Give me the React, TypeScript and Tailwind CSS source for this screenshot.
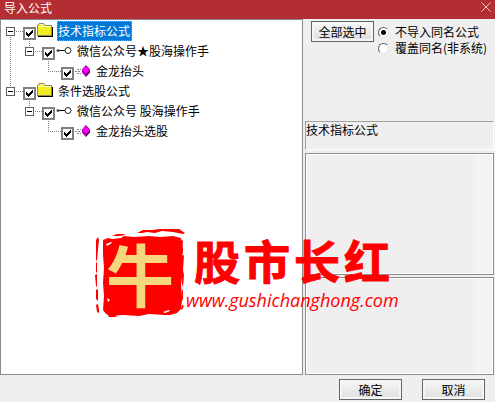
import { useState } from 'react';
import type { ReactNode } from 'react';

type Gutter = 'blank' | 'through' | 'rootFirst' | 'rootLast' | 'branch' | 'leaf';

type Row = {
  id: string;
  label: string;
  icon: 'folder' | 'key' | 'gem';
  gutters: Gutter[];
};

const rows: Row[] = [
  { id: 'tech', label: '技术指标公式', icon: 'folder', gutters: ['rootFirst'] },
  { id: 'tech-group', label: '微信公众号★股海操作手', icon: 'key', gutters: ['through', 'branch'] },
  { id: 'tech-item', label: '金龙抬头', icon: 'gem', gutters: ['through', 'blank', 'leaf'] },
  { id: 'pick', label: '条件选股公式', icon: 'folder', gutters: ['rootLast'] },
  { id: 'pick-group', label: '微信公众号 股海操作手', icon: 'key', gutters: ['blank', 'branch'] },
  { id: 'pick-item', label: '金龙抬头选股', icon: 'gem', gutters: ['blank', 'blank', 'leaf'] },
];

function GutterCell({ kind }: { kind: Gutter }) {
  const expandable = kind === 'rootFirst' || kind === 'rootLast' || kind === 'branch';
  const passes = kind === 'through' || kind === 'rootFirst';
  const fromAbove = passes || kind === 'rootLast' || kind === 'branch' || kind === 'leaf';
  const top = kind === 'rootFirst' ? 10 : 0;
  const bottom = passes ? 20 : 11;
  const wide = expandable || kind === 'leaf';
  return (
    <svg
      className={wide ? 'h-5 w-[22px] shrink-0' : 'h-5 w-[19px] shrink-0'}
      viewBox={wide ? '0 0 22 20' : '0 0 19 20'}
      fill="none"
      shapeRendering="crispEdges"
      aria-hidden="true"
    >
      {fromAbove && <path d={`M9.5 ${top}V${bottom}`} stroke="#808080" strokeDasharray="1 1" />}
      {wide && <path d="M9 10.5H22" stroke="#808080" strokeDasharray="1 1" />}
      {expandable && (
        <>
          <rect x="5.5" y="6.5" width="8" height="8" fill="#fff" stroke="#606060" />
          <path d="M7 10.5H12" stroke="#000" />
        </>
      )}
    </svg>
  );
}

function NodeIcon({ kind }: { kind: Row['icon'] }) {
  if (kind === 'folder') {
    return (
      <svg className="h-4 w-4" viewBox="0 0 16 16" shapeRendering="crispEdges" aria-hidden="true">
        <path d="M1 13h14V4h1v10H1z" fill="#000" />
        <path d="M.5 12.500v-10l2-2h4l2 2h6v10z" fill="#f0ec20" stroke="#8c8c60" />
        <path d="M3 1.500h3M2 3.500h12" stroke="#ffffc8" />
        <path d="M2 5.500h12M2 7.500h12M2 9.500h12M2 11.500h12" stroke="#e0e0a0" strokeDasharray="1 1" />
      </svg>
    );
  }
  if (kind === 'key') {
    return (
      <svg className="h-4 w-4" viewBox="0 0 16 16" fill="none" aria-hidden="true">
        <path d="M3 7.500h6" stroke="#000" />
        <circle cx="2" cy="7.500" r="1.500" fill="#555" />
        <circle cx="12" cy="7.500" r="3" stroke="#222" />
      </svg>
    );
  }
  return (
    <svg className="h-4 w-4" viewBox="0 0 16 16" fill="none" aria-hidden="true">
      <path d="M2 6.500h4M0 8.500h5M2 10.500h4" stroke="#808080" strokeDasharray="2 1" shapeRendering="crispEdges" />
      <path d="M11 2l4 4.500v3l-4 4.500-4-4.500v-3z" fill="#600060" />
      <path d="M11 3l4 4-4 4-4-4z" fill="#ff00ff" />
      <path d="M7 8l4 4v1.500l-4-4z" fill="#e800e8" />
    </svg>
  );
}

function TreeRow({ row, selected, onSelect }: { row: Row; selected: boolean; onSelect: () => void }) {
  const [checked, setChecked] = useState(true);
  return (
    <li className="flex h-5 items-center">
      {row.gutters.map((kind, i) => (
        <GutterCell key={i} kind={kind} />
      ))}
      <span className="grid h-5 w-[13px] shrink-0 items-end pb-px">
        <input
          id={row.id}
          type="checkbox"
          checked={checked}
          onChange={() => setChecked(!checked)}
          className="col-start-1 row-start-1 h-[13px] w-[13px] appearance-none border-2 border-[#808080] bg-white"
        />
        {checked && (
          <svg className="pointer-events-none col-start-1 row-start-1 h-[13px] w-[13px]" viewBox="0 0 13 13" aria-hidden="true">
            <path d="M3 5l2 2 5-5v3L5 10 3 8z" fill="#000" shapeRendering="crispEdges" />
          </svg>
        )}
      </span>
      <span className="ml-px w-5">
        <NodeIcon kind={row.icon} />
      </span>
      <label
        htmlFor={row.id}
        onClick={onSelect}
        className={
          selected
            ? 'h-5 border border-dotted border-[#ff8728] bg-[#0078d7] pr-px leading-[18px] whitespace-nowrap text-white'
            : 'h-5 border border-transparent pr-px leading-[18px] whitespace-nowrap'
        }
      >
        {row.label}
      </label>
    </li>
  );
}

function PushButton({ children }: { children: ReactNode }) {
  return (
    <button
      type="button"
      className="h-[21px] w-[63px] border border-[#666] bg-linear-to-b from-[#f8f8f8] to-[#dedede] leading-[17px] whitespace-nowrap shadow-[inset_0_0_0_2px_#f6f6f6]"
    >
      {children}
    </button>
  );
}

function ModeRadio({ label, checked, onChange }: { label: string; checked: boolean; onChange: () => void }) {
  return (
    <label className="flex h-4 items-center gap-[6px] whitespace-nowrap">
      <input
        type="radio"
        name="mode"
        checked={checked}
        onChange={onChange}
        className="h-[11px] w-[11px] shrink-0 appearance-none rounded-full border border-t-[#606060] border-r-[#e4e4e4] border-b-[#e4e4e4] border-l-[#606060] bg-white checked:bg-[radial-gradient(circle,#000_2px,#fff_3px)]"
      />
      {label}
    </label>
  );
}

function InfoBox({ label, className }: { label: string; className: string }) {
  return (
    <div className={`flex border border-[#8c8c8c] bg-white p-px ${className}`}>
      <textarea aria-label={label} readOnly className="block min-w-0 flex-1 resize-none bg-[#efefef] outline-none" />
      <div className="w-[17px] bg-[#f4f3f2]" />
    </div>
  );
}

function Watermark() {
  return (
    <div className="pointer-events-none absolute top-[228px] left-[94px] flex text-[#ff0000]">
      <div className="grid h-[90px] w-[92px] place-items-center">
        <svg className="col-start-1 row-start-1 h-[90px] w-[92px]" viewBox="0 0 92 90" fill="#ff0000" aria-hidden="true">
          <path d="M9 12l5-2 4 1 9-1 3-2 10 1 15-1 11 1 13-1 8 2 2 12-1 11 1 8-2 16 1 15-1 9-4 4-7 2-6 0-15-1-10 2-16-1-12 1-5-2-3-4 1-14-1-13 1-15-1-13z" />
          <path d="M43 5l6-3 9 0 8-1 10 0 9 0 6 4-2 1-10-2-11-1-7 2-8-1-5 1z" />
          <path d="M18 8l5-2 6 0 3 1-8 1zM2 12l2-3 1 3-1 9-1 12-1-1zM2 34l1 1 0 9-1 1zM1 47l2-1 0 13-1-1zM2 62l2-1 0 12-2-2zM2 77l2-1 1 6 0 3-2-1zM87 12l2 1-1 12-1-1zM88 28l2-1-1 15 1 5-1 12-1-3zM88 61l1 2 0 9-2-1zM88 77l2 1-2 4-1-1zM14 87h7l2 2h-8z" />
          <path d="M12 16l5-2 1 1-5 3zM69 84l6-2 1 1-5 2zM13 70l3 2-2 2z" fill="#fff" />
        </svg>
        <span className="col-start-1 row-start-1 text-[68px] leading-[80px] font-bold text-[#f8d77c]">牛</span>
      </div>
      <div className="flex flex-col">
        <div className="flex gap-[4px] pl-[8px] text-[46px] leading-[62px] font-bold [-webkit-text-stroke:1px_#ff0000]">
          <span>股</span>
          <span>市</span>
          <span>长</span>
          <span>红</span>
        </div>
        <span className="font-['Open_Sans',sans-serif] text-[18px] leading-[20px] font-medium italic">www.gushichanghong.com</span>
      </div>
    </div>
  );
}

export default function App() {
  const [selected, setSelected] = useState('tech');
  const [mode, setMode] = useState('skip');
  return (
    <main className="relative flex min-h-screen flex-col bg-[#efefef] font-['Noto_Sans_CJK_SC',sans-serif] text-[12px] leading-[16px] text-black">
      <header className="flex h-[19px] items-start justify-between bg-[#b22e32] pr-1 pl-1 text-white">
        <h1 className="leading-[16px]">导入公式</h1>
        <button type="button" aria-label="关闭" className="pt-[2px]">
          <svg className="h-[10px] w-[10px]" viewBox="0 0 10 10" stroke="#efc9ca" fill="none" aria-hidden="true">
            <path d="M.5.5l9 9M9.500.5l-9 9" />
          </svg>
        </button>
      </header>

      <div className="flex flex-1 gap-[2px]">
        <ul className="flex-1 border border-[#8c8c8c] bg-white pt-px">
          {rows.map((row) => (
            <TreeRow key={row.id} row={row} selected={selected === row.id} onSelect={() => setSelected(row.id)} />
          ))}
        </ul>

        <section className="flex w-[190px] flex-col pr-px">
          <div className="flex h-[102px] gap-[4px] pt-[2px] pl-[6px]">
            <PushButton>全部选中</PushButton>
            <div className="pt-[3px]">
              <ModeRadio label="不导入同名公式" checked={mode === 'skip'} onChange={() => setMode('skip')} />
              <ModeRadio label="覆盖同名(非系统)" checked={mode === 'replace'} onChange={() => setMode('replace')} />
            </div>
          </div>
          <output className="block h-[29px] border border-t-[#a0a0a0] border-r-white border-b-white border-l-[#a0a0a0]">
            技术指标公式
          </output>
          <InfoBox label="公式说明" className="mt-[3px] h-[122px]" />
          <InfoBox label="公式参数" className="mt-[2px] flex-1" />
        </section>
      </div>

      <footer className="flex h-[27px] justify-end gap-5 pt-1 pr-[10px]">
        <PushButton>确定</PushButton>
        <PushButton>取消</PushButton>
      </footer>

      <Watermark />
    </main>
  );
}
